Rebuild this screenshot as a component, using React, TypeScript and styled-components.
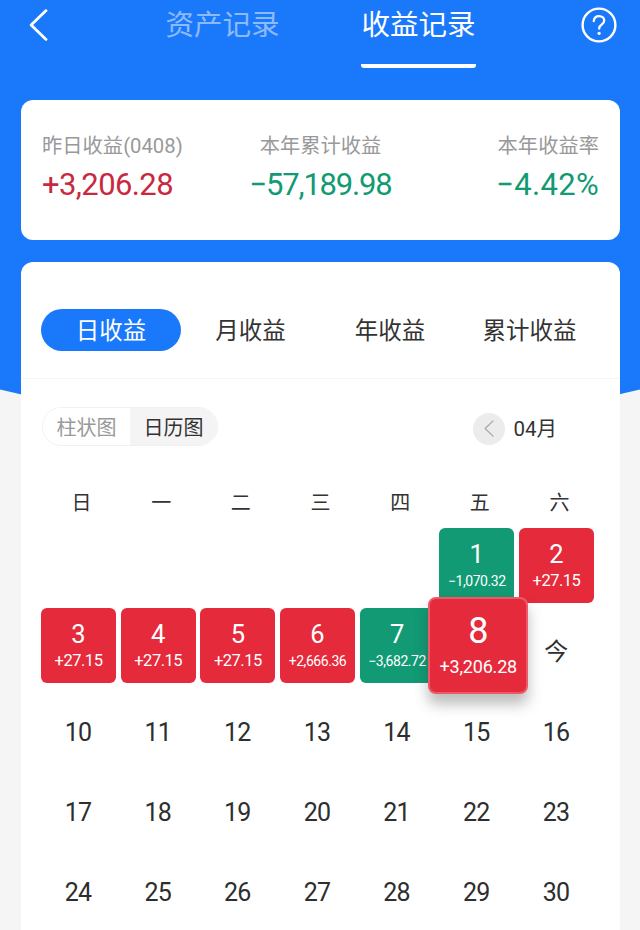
import React from "react";
import styled, { createGlobalStyle } from "styled-components";

const Global = createGlobalStyle`
  html, body { margin: 0; padding: 0; background: #f5f5f5; }
  body { font-family: Roboto, "Noto Sans CJK SC", sans-serif; }
`;
const CJK = `"Noto Sans CJK SC", sans-serif`;
const NUM = `Roboto, "Noto Sans CJK SC", sans-serif`;
const BLUE = "#1a78fb";
const RED = "#e52a3c";
const GREEN = "#119a74";

const Page = styled.div`
  position: relative; width: 640px; height: 930px; overflow: hidden; background: #f5f5f5;
`;
const Backdrop = styled.div`
  position: absolute; left: -260px; right: -260px; top: -760px; height: 1185px;
  background: ${BLUE}; border-radius: 0 0 50% 50% / 0 0 18% 18%;
`;
const Content = styled.div`
  position: relative; display: flex; flex-direction: column; padding: 0 20px 0 21px;
`;
const Header = styled.header`
  height: 100px; margin: 0 -20px 0 -21px; display: grid;
  grid-template-columns: 165px 196px 1fr; position: relative;
`;
const BackButton = styled.div`padding: 9px 0 0 29px;`;
const HeaderTab = styled.div<{ $active?: boolean }>`
  width: 115px; height: 68px; box-sizing: border-box; padding-top: 2px; text-align: center;
  font: 400 28.5px/42px ${CJK}; white-space: nowrap;
  color: ${p => (p.$active ? "#fff" : "rgba(255,255,255,.5)")};
  border-bottom: ${p => (p.$active ? "4px solid #fff" : "0")};
  border-radius: 0 0 3px 3px;
`;
const HeaderRight = styled.div`display: flex; justify-content: space-between; padding-right: 23px;`;
const HelpButton = styled.div`padding-top: 7px;`;
const SummaryCard = styled.section`
  height: 140px; background: #fff; border-radius: 12px; box-sizing: border-box;
  padding: 33px 21px 0; display: grid; grid-template-columns: 1fr auto 1fr;
`;
const Stat = styled.div<{ $align: string }>`
  display: flex; flex-direction: column; align-items: ${p => p.$align};
`;
const StatLabel = styled.div`
  font: 400 20.3px/26px ${NUM}; color: #999; white-space: nowrap;
`;
const StatValue = styled.div<{ $color: string; $spacing: number }>`
  margin-top: 8px; font: 400 31px/36px ${NUM}; letter-spacing: ${p => p.$spacing}px;
  color: ${p => p.$color}; white-space: nowrap;
`;
const RecordCard = styled.section`
  margin-top: 22px; height: 700px; background: #fff; border-radius: 12px;
`;
const PeriodTabs = styled.div`
  height: 117px; box-sizing: border-box; padding: 47px 20px 0; border-bottom: 1px solid #f6f6f6;
  display: grid; grid-template-columns: repeat(4, 139.5px);
`;
const PeriodTab = styled.div<{ $active?: boolean }>`
  width: 140px; height: 42px; border-radius: 21px; text-align: center;
  font: 400 23.5px/40px ${CJK}; white-space: nowrap;
  background: ${p => (p.$active ? BLUE : "transparent")};
  color: ${p => (p.$active ? "#fff" : "#333")};
`;
const Toolbar = styled.div`
  display: flex; justify-content: space-between; align-items: center; padding: 28px 63px 0 21px;
`;
const Segmented = styled.div`
  display: flex; height: 39px; width: 176px; border-radius: 20px; overflow: hidden;
  box-sizing: border-box; border: 1px solid #f1f1f1;
`;
const Segment = styled.div<{ $active?: boolean }>`
  flex: 1; text-align: center; font: 400 20px/37px ${CJK};
  color: ${p => (p.$active ? "#333" : "#999")};
  background: ${p => (p.$active ? "#f4f4f4" : "#fff")};
`;
const MonthNav = styled.div`
  display: flex; align-items: center; gap: 8px; padding-top: 4px; font: 400 20.5px/32px ${NUM}; color: #333;
`;
const PrevCircle = styled.div`
  width: 32px; height: 32px; border-radius: 50%; background: #ececec;
  display: flex; align-items: center; justify-content: center;
`;
const Weekdays = styled.div`
  margin-top: 38px; padding: 0 0 0 23px; display: grid;
  grid-template-columns: repeat(7, 75px); column-gap: 4.67px;
  font: 400 20px/36px ${CJK}; color: #333; text-align: center;
`;
const Weekday = styled.div``;
const Calendar = styled.div`
  margin-top: 8px; padding: 0 0 0 20px; display: grid;
  grid-template-columns: repeat(7, 75px); grid-auto-rows: 75px; gap: 5px 4.67px;
`;
const PlainDay = styled.div`
  padding-top: 26px; height: 49px; text-align: center; margin-left: -1px;
  font: 400 25px/38px ${NUM}; letter-spacing: -0.8px; color: #2e2e2e;
`;
const TodayMark = styled(PlainDay)`padding-top: 23px; font: 400 24px/38px ${CJK};`;
const DayCell = styled.div<{ $bg: string }>`
  position: relative; box-sizing: border-box; padding-top: 11px; text-align: center;
  border-radius: 6px; background: ${p => p.$bg}; color: #fff;
`;
const DayNum = styled.div`font: 400 25.5px/30px ${NUM};`;
const DayAmount = styled.div<{ $small?: boolean }>`
  margin-top: 1px; white-space: nowrap; font: 400 ${p => (p.$small ? "14px" : "16.5px")}/22px ${NUM};
  letter-spacing: ${p => (p.$small ? "-0.45px" : "-0.5px")};
`;
const SelectedDay = styled.div`
  position: absolute; z-index: 2; left: -11px; top: -11px; width: 100px; height: 97px;
  box-sizing: border-box; padding-top: 12px; border-radius: 8px; text-align: center;
  background: ${RED}; color: #fff; border: 2px solid #ec5a68;
  box-shadow: 0 10px 14px rgba(60, 60, 60, .35);
`;
const SelectedNum = styled.div`font: 400 36px/40px ${NUM};`;
const SelectedAmount = styled.div`margin-top: 4px; font: 400 18px/24px ${NUM}; letter-spacing: -0.2px;`;

type D = { n: number; a: string; g?: boolean; s?: boolean };
const active: D[] = [
  { n: 1, a: "−1,070.32", g: true, s: true },
  { n: 2, a: "+27.15" },
  { n: 3, a: "+27.15" },
  { n: 4, a: "+27.15" },
  { n: 5, a: "+27.15" },
  { n: 6, a: "+2,666.36", s: true },
  { n: 7, a: "−3,682.72", g: true, s: true },
];
const rest = Array.from({ length: 21 }, (_, i) => i + 10);
const Chevron = ({ size, color, w }: { size: number; color: string; w: number }) => (
  <svg width={size * 0.6} height={size} viewBox="0 0 18 30" fill="none">
    <path d="M16 1.5 2 15l14 13.5" stroke={color} strokeWidth={w} strokeLinecap="round" strokeLinejoin="round" />
  </svg>
);

export default function App() {
  return (
    <Page>
      <Global />
      <Backdrop />
      <Content>
        <Header>
          <BackButton><Chevron size={32} color="#fff" w={2.6} /></BackButton>
          <HeaderTab>资产记录</HeaderTab>
          <HeaderRight>
            <HeaderTab $active>收益记录</HeaderTab>
            <HelpButton>
              <svg width="36" height="36" viewBox="0 0 36 36" fill="none">
                <circle cx="18" cy="18" r="16.4" stroke="#fff" strokeWidth="2.4" />
                <path d="M12.8 14c.3-3 2.4-4.8 5.3-4.8 3 0 5.1 1.9 5.1 4.4 0 2-1 3-2.7 4.2-1.500 1-2.300 1.800-2.300 3.700" stroke="#fff" strokeWidth="2.300" strokeLinecap="round" />
                <circle cx="18.100" cy="26.300" r="1.600" fill="#fff" />
              </svg>
            </HelpButton>
          </HeaderRight>
        </Header>
        <SummaryCard>
          <Stat $align="flex-start">
            <StatLabel>昨日收益(0408)</StatLabel>
            <StatValue $color="#c9293f" $spacing={-0.6}>+3,206.28</StatValue>
          </Stat>
          <Stat $align="center">
            <StatLabel>本年累计收益</StatLabel>
            <StatValue $color={GREEN} $spacing={-1.2}>−57,189.98</StatValue>
          </Stat>
          <Stat $align="flex-end">
            <StatLabel>本年收益率</StatLabel>
            <StatValue $color={GREEN} $spacing={0.3}>−4.42%</StatValue>
          </Stat>
        </SummaryCard>
        <RecordCard>
          <PeriodTabs>
            <PeriodTab $active>日收益</PeriodTab>
            <PeriodTab>月收益</PeriodTab>
            <PeriodTab>年收益</PeriodTab>
            <PeriodTab>累计收益</PeriodTab>
          </PeriodTabs>
          <Toolbar>
            <Segmented>
              <Segment>柱状图</Segment>
              <Segment $active>日历图</Segment>
            </Segmented>
            <MonthNav>
              <PrevCircle><Chevron size={17} color="#a8a8a8" w={2.2} /></PrevCircle>
              04月
            </MonthNav>
          </Toolbar>
          <Weekdays>
            {["日", "一", "二", "三", "四", "五", "六"].map(d => <Weekday key={d}>{d}</Weekday>)}
          </Weekdays>
          <Calendar>
            {Array.from({ length: 5 }, (_, i) => <div key={i} />)}
            {active.map(d => (
              <DayCell key={d.n} $bg={d.g ? GREEN : RED}>
                <DayNum>{d.n}</DayNum>
                <DayAmount $small={d.s}>{d.a}</DayAmount>
              </DayCell>
            ))}
            <DayCell $bg="transparent">
              <SelectedDay>
                <SelectedNum>8</SelectedNum>
                <SelectedAmount>+3,206.28</SelectedAmount>
              </SelectedDay>
            </DayCell>
            <TodayMark>今</TodayMark>
            {rest.map(n => <PlainDay key={n}>{n}</PlainDay>)}
          </Calendar>
        </RecordCard>
      </Content>
    </Page>
  );
}
